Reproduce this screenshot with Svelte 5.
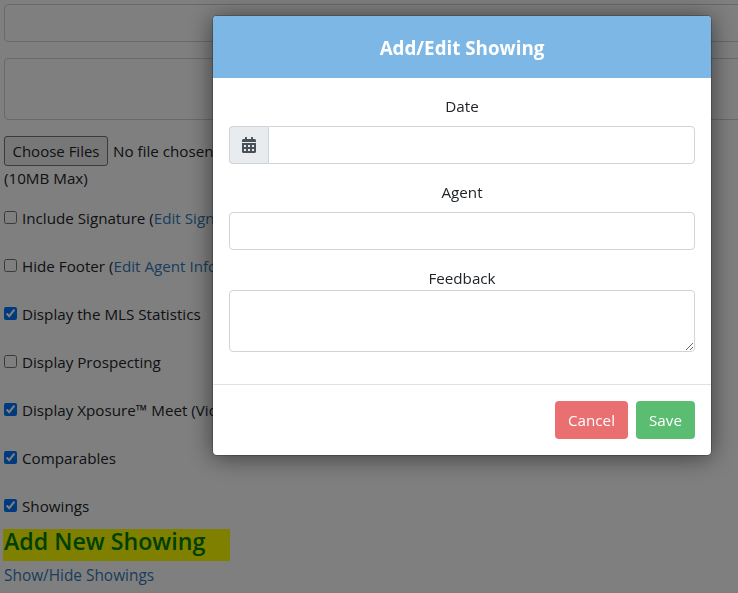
<script>
  const rows = [
    { checked: false, text: 'Include Signature (', link: 'Edit Signature', after: ')' },
    { checked: false, text: 'Hide Footer (', link: 'Edit Agent Info', after: ')' },
    { checked: true, text: 'Display the MLS Statistics' },
    { checked: false, text: 'Display Prospecting' },
    { checked: true, text: 'Display Xposure™ Meet (Video Conference)' },
    { checked: true, text: 'Comparables' },
    { checked: true, text: 'Showings' }
  ];
</script>

<div class="page">
  <input class="field top" type="text" />
  <textarea class="field big"></textarea>
  <div class="file-row">
    <button type="button" class="file-btn">Choose Files</button>
    <span>No file chosen</span>
  </div>
  <div class="max">(10MB Max)</div>
  <div class="checks">
    {#each rows as row}
      <label class="check">
        <input type="checkbox" checked={row.checked} />
        <span>{row.text}{#if row.link}<a href="#top">{row.link}</a>{row.after}{/if}</span>
      </label>
    {/each}
  </div>
  <h3 class="add">Add New Showing</h3>
  <a class="toggle" href="#top">Show/Hide Showings</a>
</div>

<div class="backdrop"></div>

<div class="modal-wrap">
  <div class="modal">
    <header class="modal-head"><h4>Add/Edit Showing</h4></header>
    <div class="modal-body">
      <div class="group">
        <label for="date">Date</label>
        <div class="input-group">
          <span class="addon">
            <svg viewBox="0 0 448 512" width="14" height="16" aria-hidden="true">
              <path fill="#495057" d="M0 464c0 26.500 21.500 48 48 48h352c26.500 0 48-21.500 48-48V192H0v272zm320-196c0-6.600 5.400-12 12-12h40c6.600 0 12 5.400 12 12v40c0 6.600-5.400 12-12 12h-40c-6.600 0-12-5.400-12-12v-40zm0 128c0-6.600 5.400-12 12-12h40c6.600 0 12 5.400 12 12v40c0 6.600-5.400 12-12 12h-40c-6.600 0-12-5.400-12-12v-40zM192 268c0-6.600 5.400-12 12-12h40c6.600 0 12 5.400 12 12v40c0 6.600-5.400 12-12 12h-40c-6.600 0-12-5.400-12-12v-40zm0 128c0-6.600 5.400-12 12-12h40c6.600 0 12 5.400 12 12v40c0 6.600-5.400 12-12 12h-40c-6.600 0-12-5.400-12-12v-40zM64 268c0-6.600 5.400-12 12-12h40c6.600 0 12 5.400 12 12v40c0 6.600-5.400 12-12 12H76c-6.600 0-12-5.400-12-12v-40zm0 128c0-6.600 5.400-12 12-12h40c6.600 0 12 5.400 12 12v40c0 6.600-5.400 12-12 12H76c-6.600 0-12-5.400-12-12v-40zM400 64h-48V16c0-8.800-7.200-16-16-16h-32c-8.800 0-16 7.200-16 16v48H160V16c0-8.800-7.200-16-16-16h-32c-8.800 0-16 7.200-16 16v48H48C21.500 64 0 85.500 0 112v48h448v-48c0-26.500-21.500-48-48-48z" />
            </svg>
          </span>
          <input id="date" class="control joined" type="text" />
        </div>
      </div>
      <div class="group">
        <label for="agent">Agent</label>
        <input id="agent" class="control" type="text" />
      </div>
      <div class="group tight">
        <label for="feedback">Feedback</label>
        <textarea id="feedback" class="control area"></textarea>
      </div>
    </div>
    <footer class="modal-foot">
      <button type="button" class="btn cancel">Cancel</button>
      <button type="button" class="btn save">Save</button>
    </footer>
  </div>
</div>

<style>
  :global(body) {
    margin: 0;
    overflow: hidden;
    background: #fff;
    font-family: "Open Sans", "Noto Sans", "Liberation Sans", sans-serif;
    font-size: 15.2px;
    color: #212529;
  }

  .page {
    height: 593px;
    overflow: hidden;
    padding: 4px 0 0 4px;
    box-sizing: border-box;
  }

  .field {
    display: block;
    width: 1000px;
    box-sizing: border-box;
    border: 1px solid #ced4da;
    border-radius: 4px;
    background: #fff;
    margin: 0;
    padding: 0;
  }

  .top { height: 38px; margin-bottom: 16px; }
  .big { height: 62px; margin-bottom: 15px; resize: none; }

  .file-row {
    display: flex;
    align-items: center;
    gap: 5px;
    height: 31px;
  }

  .file-btn {
    height: 30px;
    width: 104px;
    padding: 0;
    margin: 0;
    font: inherit;
    font-size: 15px;
    color: #212529;
    background: #efefef;
    border: 1px solid #767676;
    border-radius: 3px;
    white-space: nowrap;
  }

  .file-row span { white-space: nowrap; }

  .max { height: 22px; line-height: 24px; }

  .checks { margin-top: 18px; display: flex; flex-direction: column; gap: 24px; }

  .check {
    display: flex;
    align-items: center;
    gap: 5px;
    height: 24px;
    white-space: nowrap;
  }

  .check input { margin: -1px 0 1px; width: 13px; height: 13px; }

  a { color: #337ab7; text-decoration: none; }

  .add {
    margin: 11px 0 0 -1px;
    width: 227px;
    height: 32px;
    line-height: 25px;
    background: #ffff00;
    color: #008000;
    font-size: 23.2px;
    font-weight: 600;
    padding-left: 1px;
    box-sizing: border-box;
    white-space: nowrap;
  }

  .toggle { display: block; margin-top: 4px; line-height: 22px; font-size: 15.4px; }

  .backdrop {
    position: fixed;
    inset: 0;
    background: #000;
    opacity: 0.5;
  }

  .modal-wrap {
    position: fixed;
    inset: 0;
    padding: 15px 0 0 212px;
  }

  .modal {
    width: 500px;
    box-sizing: border-box;
    background: #fff;
    border: 1px solid rgba(0, 0, 0, 0.2);
    border-radius: 5px;
    background-clip: padding-box;
    box-shadow: 0 2px 24px rgba(0, 0, 0, 0.5);
    overflow: hidden;
  }

  .modal-head {
    height: 62px;
    box-sizing: border-box;
    padding-top: 1px;
    display: flex;
    align-items: center;
    justify-content: center;
    background: #7cb7e5;
  }

  .modal-head h4 {
    margin: 0;
    color: #fff;
    font-size: 18.8px;
    font-weight: 700;
  }

  .modal-body { padding: 16px 16px 0; }

  .group { margin-bottom: 16px; }
  .group.tight { margin-bottom: 0; }

  .group label {
    display: block;
    text-align: center;
    line-height: 24px;
    margin-bottom: 8px;
    color: #212529;
  }

  .group.tight label { margin-bottom: 0; }

  .input-group { display: flex; }

  .addon {
    width: 39px;
    height: 38px;
    box-sizing: border-box;
    flex: none;
    display: flex;
    align-items: center;
    justify-content: center;
    background: #e9ecef;
    border: 1px solid #ced4da;
    border-right: 0;
    border-radius: 4px 0 0 4px;
  }

  .control {
    display: block;
    width: 100%;
    height: 38px;
    box-sizing: border-box;
    border: 1px solid #ced4da;
    border-radius: 4px;
    background: #fff;
    margin: 0;
    padding: 0 12px;
    font: inherit;
  }

  .joined { border-radius: 0 4px 4px 0; }

  .area { height: 62px; resize: vertical; }

  .modal-foot {
    display: flex;
    justify-content: flex-end;
    gap: 8px;
    margin-top: 32px;
    padding: 16px;
    border-top: 1px solid #dee2e6;
  }

  .btn {
    height: 38px;
    padding: 0 12px;
    margin: 0;
    border: 1px solid transparent;
    border-radius: 4px;
    color: #fff;
    font: inherit;
  }

  .cancel { width: 73px; background: #e96f71; }
  .save { width: 59px; background: #5abd71; }
</style>
